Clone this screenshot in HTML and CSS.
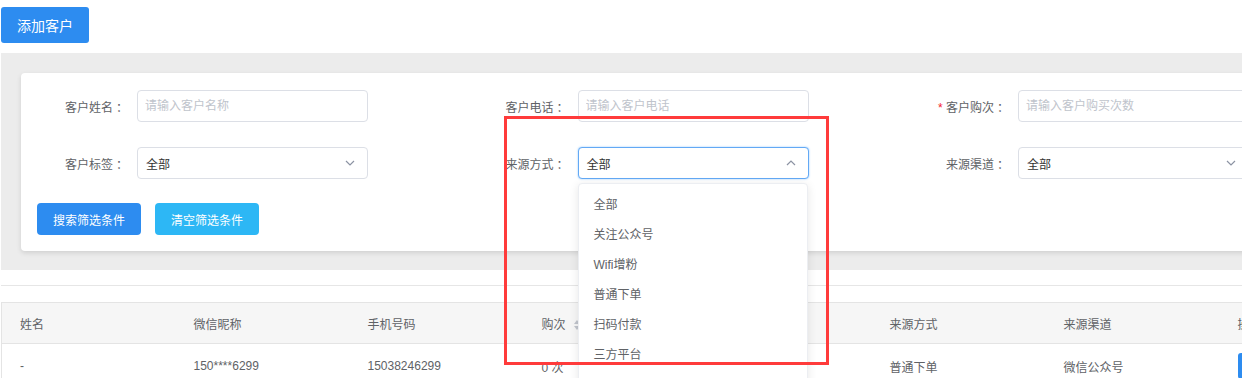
FILE: index.html
```html
<!DOCTYPE html>
<html lang="zh-CN">
<head>
  <meta charset="UTF-8" />
  <title>客户管理</title>
  <link rel="stylesheet" href="styles.css">
</head>
<body>

<div class="page">
  <button class="add-btn">添加客户</button>

  <!-- 筛选条件 -->
  <div class="filter-wrap">
    <div class="filter-card">
      <div class="form-grid">
        <div class="field">
          <label class="field-label">客户姓名<span class="colon">：</span></label>
          <input class="field-input" type="text" placeholder="请输入客户名称" />
        </div>
        <div class="field">
          <label class="field-label">客户电话<span class="colon">：</span></label>
          <input class="field-input" type="text" placeholder="请输入客户电话" />
        </div>
        <div class="field">
          <label class="field-label"><span class="required">*</span> 客户购次<span class="colon">：</span></label>
          <input class="field-input" type="text" placeholder="请输入客户购买次数" />
        </div>

        <div class="field">
          <label class="field-label">客户标签<span class="colon">：</span></label>
          <div class="select">
            <span class="select-value">全部</span>
            <svg class="select-arrow" width="10" height="6" viewBox="0 0 10 6"><path d="M1 1l4 4 4-4" fill="none" stroke="#8c93a3" stroke-width="1.2"/></svg>
          </div>
        </div>
        <div class="field">
          <label class="field-label">来源方式<span class="colon">：</span></label>
          <div class="select is-open">
            <span class="select-value">全部</span>
            <svg class="select-arrow" width="10" height="6" viewBox="0 0 10 6"><path d="M1 5l4-4 4 4" fill="none" stroke="#8c93a3" stroke-width="1.2"/></svg>
            <ul class="dropdown">
              <li>全部</li>
              <li>关注公众号</li>
              <li>Wifi增粉</li>
              <li>普通下单</li>
              <li>扫码付款</li>
              <li>三方平台</li>
            </ul>
          </div>
        </div>
        <div class="field">
          <label class="field-label">来源渠道<span class="colon">：</span></label>
          <div class="select">
            <span class="select-value">全部</span>
            <svg class="select-arrow" width="10" height="6" viewBox="0 0 10 6"><path d="M1 1l4 4 4-4" fill="none" stroke="#8c93a3" stroke-width="1.2"/></svg>
          </div>
        </div>
      </div>

      <div class="filter-actions">
        <button class="btn btn-search">搜索筛选条件</button>
        <button class="btn btn-clear">清空筛选条件</button>
      </div>
    </div>
  </div>

  <div class="divider"></div>

  <!-- 客户列表 -->
  <table class="customer-table">
    <colgroup>
      <col><col><col><col><col><col><col><col>
    </colgroup>
    <thead>
      <tr>
        <th>姓名</th>
        <th>微信昵称</th>
        <th>手机号码</th>
        <th>购次
          <svg class="sort-icon" width="8" height="12" viewBox="0 0 8 12"><path d="M4 1L7 5H1z" fill="#c0c4cc"/><path d="M4 11L1 7h6z" fill="#c0c4cc"/></svg>
        </th>
        <th>消费金额</th>
        <th>来源方式</th>
        <th>来源渠道</th>
        <th>操作</th>
      </tr>
    </thead>
    <tbody>
      <tr>
        <td>-</td>
        <td>150****6299</td>
        <td>15038246299</td>
        <td>0 次</td>
        <td>0.00</td>
        <td>普通下单</td>
        <td>微信公众号</td>
        <td><button class="ops-btn">编辑</button></td>
      </tr>
    </tbody>
  </table>
</div>

<!-- 标注框 -->
<div class="highlight-box"></div>

</body>
</html>
```

FILE: styles.css
```css
/* Base */
body {
  margin: 0;
  font-family: "Liberation Sans", "Noto Sans CJK SC", sans-serif;
  font-size: 12px;
  color: #606266;
  background: #fff;
  overflow: hidden;
}

.page {
  padding: 7px 0 0 1px;
  width: 1500px;
}

button {
  font-family: inherit;
  border: none;
  cursor: pointer;
}

/* Add button */
.add-btn {
  display: block;
  width: 88px;
  height: 36px;
  background: #2d8cf0;
  color: #fff;
  font-size: 14px;
  border-radius: 3px;
  margin-bottom: 10px;
}

/* Filter area */
.filter-wrap {
  background: #ececec;
  padding: 20px 20px 19px;
}

.filter-card {
  background: #fff;
  border-radius: 4px;
  box-shadow: 0 2px 5px rgba(0, 0, 0, 0.12);
  padding: 17px 16px 16px;
}

.form-grid {
  display: grid;
  grid-template-columns: repeat(3, 440.5px);
  row-gap: 25px;
}

.field {
  display: flex;
  align-items: center;
}

.field-label {
  width: 100px;
  padding-right: 9px;
  box-sizing: border-box;
  text-align: right;
  color: #606266;
  white-space: nowrap;
}

.colon {
  margin-left: 3px;
}

.required {
  color: #f5222d;
}

.field-input,
.select {
  width: 231px;
  height: 32px;
  box-sizing: border-box;
  border: 1px solid #dcdfe6;
  border-radius: 4px;
  font-family: inherit;
  font-size: 12px;
  color: #333;
  padding: 0 7px;
  background: #fff;
}

.field-input::placeholder {
  color: #c0c4cc;
}

.select {
  position: relative;
  display: flex;
  align-items: center;
  justify-content: space-between;
  padding: 0 12px 0 8px;
}

.select.is-open {
  border-color: #63a9f5;
  box-shadow: 0 0 2px rgba(64, 158, 255, 0.6);
}

.select-arrow {
  display: block;
}

/* Dropdown */
.dropdown {
  position: absolute;
  left: -1px;
  top: 35px;
  width: 230px;
  height: 220px;
  overflow: hidden;
  box-sizing: border-box;
  margin: 0;
  padding: 6px 0;
  list-style: none;
  background: #fff;
  border: 1px solid #eceef2;
  border-radius: 4px;
  box-shadow: 0 2px 10px rgba(0, 0, 0, 0.1);
  z-index: 10;
}

.dropdown li {
  height: 30px;
  line-height: 30px;
  padding-left: 15px;
  color: #606266;
}

/* Filter buttons */
.filter-actions {
  display: flex;
  gap: 14px;
  margin-top: 24px;
}

.btn {
  width: 104px;
  height: 32px;
  color: #fff;
  font-size: 12px;
  border-radius: 4px;
}

.btn-search {
  background: #2d8cf0;
}

.btn-clear {
  background: #2db7f5;
}

.divider {
  height: 1px;
  background: #e6e6e6;
  margin-top: 15px;
}

/* Table */
.customer-table {
  margin-top: 16px;
  border-collapse: collapse;
  table-layout: fixed;
  width: 1392px;
  border-left: 1px solid #e4e4e4;
}

.customer-table col {
  width: 174px;
}

.customer-table th,
.customer-table td {
  text-align: left;
  font-weight: normal;
  padding: 0 0 0 18px;
  color: #606266;
  white-space: nowrap;
}

.customer-table th {
  height: 40px;
  background: #f6f6f6;
  border-top: 1px solid #e4e4e4;
  border-bottom: 1px solid #e4e4e4;
}

.customer-table td {
  height: 44px;
}

.sort-icon {
  vertical-align: -2px;
  margin-left: 4px;
}

.ops-btn {
  display: block;
  height: 26px;
  width: 50px;
  background: #2d8cf0;
  color: #fff;
  font-size: 12px;
  border-radius: 3px;
}

/* Red annotation box */
.highlight-box {
  position: absolute;
  left: 504px;
  top: 116px;
  width: 325px;
  height: 249px;
  box-sizing: border-box;
  border: 3px solid #ff3b3b;
  pointer-events: none;
  z-index: 20;
}
```
